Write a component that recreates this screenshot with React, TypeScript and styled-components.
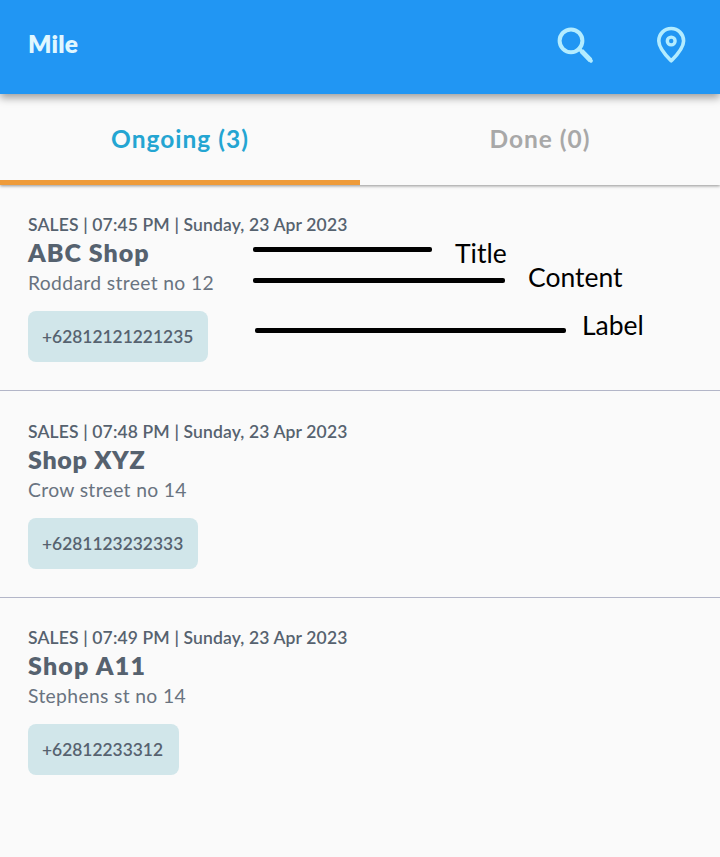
import React from 'react';
import styled, { createGlobalStyle } from 'styled-components';

const GlobalStyle = createGlobalStyle`
  * { box-sizing: border-box; }
  body { margin: 0; background: #fafafa; font-family: Lato, "Noto Sans", sans-serif; }
`;

const Screen = styled.main`
  position: relative;
  width: 720px;
  height: 857px;
  display: flex;
  flex-direction: column;
  background: #fafafa;
  overflow: hidden;
`;

const AppBar = styled.header`
  height: 94px;
  flex: none;
  display: flex;
  align-items: center;
  padding: 0 28px;
  background: #2196f3;
  box-shadow: 0 4px 8px rgba(0, 0, 0, 0.36);
  z-index: 2;
`;

const Brand = styled.h1`
  margin: 0 auto 6px 0;
  font-size: 24.5px;
  line-height: 30px;
  font-weight: 800;
  letter-spacing: 0.2px;
  color: #e0f7ff;
`;

const Actions = styled.div`
  display: flex;
  gap: 56px;
  padding-bottom: 4px;
`;

const IconButton = styled.button`
  width: 40px;
  height: 40px;
  padding: 0;
  border: 0;
  background: none;
  color: #b3ecff;
  svg { display: block; }
`;

const Tabs = styled.nav`
  height: 91px;
  flex: none;
  display: grid;
  grid-template-columns: 1fr 1fr;
  background: #fafafa;
  box-shadow: 0 1px 3px rgba(0, 0, 0, 0.42);
  z-index: 1;
`;

const Tab = styled.button<{ $active?: boolean }>`
  border: 0;
  border-bottom: 5px solid ${(p) => (p.$active ? '#ee9b3a' : 'transparent')};
  padding: 3px 0 0;
  background: none;
  font: 700 24.5px/30px Lato, sans-serif;
  letter-spacing: 1px;
  color: ${(p) => (p.$active ? '#24a5d2' : '#a8a8a8')};
`;

const List = styled.div`
  display: flex;
  flex-direction: column;
`;

const Visit = styled.article<{ $height: number; $top: number }>`
  height: ${(p) => p.$height}px;
  padding: ${(p) => p.$top}px 28px 0;
  display: flex;
  flex-direction: column;
  align-items: flex-start;
  border-bottom: 1px solid #b3b6c8;
  color: #56626f;
  white-space: nowrap;
  &:last-child { border-bottom-color: transparent; }
`;

const Meta = styled.div`
  font-size: 17.5px;
  line-height: 24px;
  font-weight: 600;
  letter-spacing: 0.14px;
`;

const Title = styled.h2<{ $spacing: number }>`
  margin: 0;
  font-size: 25px;
  line-height: 30px;
  font-weight: 800;
  letter-spacing: ${(p) => p.$spacing}px;
`;

const Address = styled.div`
  margin-top: 2px;
  font-size: 19.3px;
  line-height: 28px;
  letter-spacing: 0.35px;
  color: #697380;
`;

const Phone = styled.div<{ $width: number }>`
  width: ${(p) => p.$width}px;
  height: 51px;
  margin-top: 14px;
  padding-left: 14px;
  border-radius: 8px;
  background: #d1e6ea;
  font-size: 17.4px;
  line-height: 51px;
  font-weight: 600;
`;

const Note = styled.div<{ $x: number; $y: number }>`
  position: absolute;
  left: ${(p) => p.$x}px;
  top: ${(p) => p.$y}px;
  font-size: 26.5px;
  line-height: 32px;
  color: #000;
`;

const Pointer = styled.div<{ $x: number; $y: number; $width: number }>`
  position: absolute;
  left: ${(p) => p.$x}px;
  top: ${(p) => p.$y}px;
  width: ${(p) => p.$width}px;
  height: 5px;
  border-radius: 2px;
  background: #000;
`;

const visits = [
  { time: '07:45 PM', title: 'ABC Shop', spacing: 1, address: 'Roddard street no 12', phone: '+62812121221235', width: 180, height: 206, top: 28 },
  { time: '07:48 PM', title: 'Shop XYZ', spacing: 0.7, address: 'Crow street no 14', phone: '+6281123232333', width: 170, height: 207, top: 29 },
  { time: '07:49 PM', title: 'Shop A11', spacing: 1.2, address: 'Stephens st no 14', phone: '+62812233312', width: 151, height: 206, top: 28 },
];

const pointers = [
  { text: 'Title', x: 455, y: 237, lineX: 253, lineY: 247, width: 179 },
  { text: 'Content', x: 528, y: 261, lineX: 253, lineY: 278, width: 252 },
  { text: 'Label', x: 582, y: 309, lineX: 255, lineY: 328, width: 311 },
];

export default function App() {
  return (
    <>
      <GlobalStyle />
      <Screen>
        <AppBar>
          <Brand>Mile</Brand>
          <Actions>
            <IconButton aria-label="Search">
              <svg width="40" height="40" viewBox="0 0 40 40" fill="none" stroke="currentColor">
                <circle cx="15" cy="15.8" r="11.4" strokeWidth="4" />
                <path d="M23 23.500 35 35.800" strokeWidth="3.800" strokeLinecap="round" />
                <path d="M25.500 26 34.500 35.200" strokeWidth="4.800" />
              </svg>
            </IconButton>
            <IconButton aria-label="Map">
              <svg width="40" height="40" viewBox="0 0 40 40" fill="none" stroke="currentColor">
                <path d="M19.200 35.800C15 31.500 6.800 23.500 6.800 15.900a12.400 12.400 0 0 1 24.800 0C31.600 23.500 23.400 31.500 19.200 35.800Z" strokeWidth="3.600" strokeLinejoin="round" />
                <circle cx="19.200" cy="16" r="3.900" strokeWidth="3.400" />
              </svg>
            </IconButton>
          </Actions>
        </AppBar>
        <Tabs>
          <Tab $active>Ongoing (3)</Tab>
          <Tab>Done (0)</Tab>
        </Tabs>
        <List>
          {visits.map((v) => (
            <Visit key={v.phone} $height={v.height} $top={v.top}>
              <Meta>SALES | {v.time} | Sunday, 23 Apr 2023</Meta>
              <Title $spacing={v.spacing}>{v.title}</Title>
              <Address>{v.address}</Address>
              <Phone $width={v.width}>{v.phone}</Phone>
            </Visit>
          ))}
        </List>
        {pointers.map((p) => (
          <React.Fragment key={p.text}>
            <Pointer $x={p.lineX} $y={p.lineY} $width={p.width} />
            <Note $x={p.x} $y={p.y}>{p.text}</Note>
          </React.Fragment>
        ))}
      </Screen>
    </>
  );
}
